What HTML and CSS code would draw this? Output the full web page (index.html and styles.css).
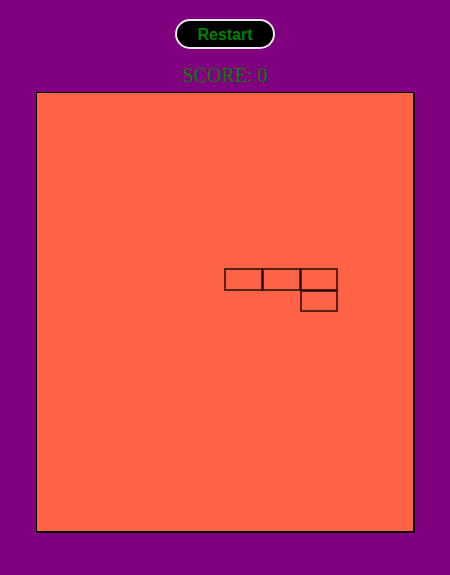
FILE: index.html
```html
<!DOCTYPE html>
<html>
<head>
<meta charset="utf-8">
<link rel="stylesheet" href="styles.css">
</head>
<body>
<div class="top">
  <button class="restart">Restart</button>
  <div class="score">SCORE: 0</div>
</div>
<div class="board">
  <div class="cell" style="grid-column:6;grid-row:9"></div>
  <div class="cell" style="grid-column:7;grid-row:9"></div>
  <div class="cell" style="grid-column:8;grid-row:9"></div>
  <div class="cell" style="grid-column:8;grid-row:10"></div>
</div>
</body>
</html>
```
FILE: styles.css
```css
html, body {
  margin: 0;
  padding: 0;
  background: #800080;
}
body {
  width: 450px;
  height: 575px;
  overflow: hidden;
}
.top {
  display: flex;
  flex-direction: column;
  align-items: center;
  padding-top: 19px;
}
.restart {
  width: 100px;
  height: 30px;
  border: 2px solid #e8e8e8;
  border-radius: 15px;
  background: #000;
  color: #008000;
  font-family: "Liberation Sans", Arial, sans-serif;
  font-weight: bold;
  font-size: 16px;
  padding: 2px 0 0 0;
  margin: 0;
}
.score {
  margin-top: 14px;
  font-family: "Liberation Serif", "Times New Roman", serif;
  font-size: 20px;
  line-height: 24px;
  color: #008000;
}
.board {
  margin: 5px 0 0 36px;
  width: 376px;
  height: 438px;
  border: 1px solid #000;
  box-shadow: 1px 1px 0 #000;
  background: #ff6347;
  display: grid;
  grid-template-columns: repeat(10, 37.6px);
  grid-template-rows: repeat(20, 21.9px);
}
.cell {
  box-sizing: border-box;
  border: 2px solid rgba(0, 0, 0, 0.65);
  margin: -0.5px;
}
```
